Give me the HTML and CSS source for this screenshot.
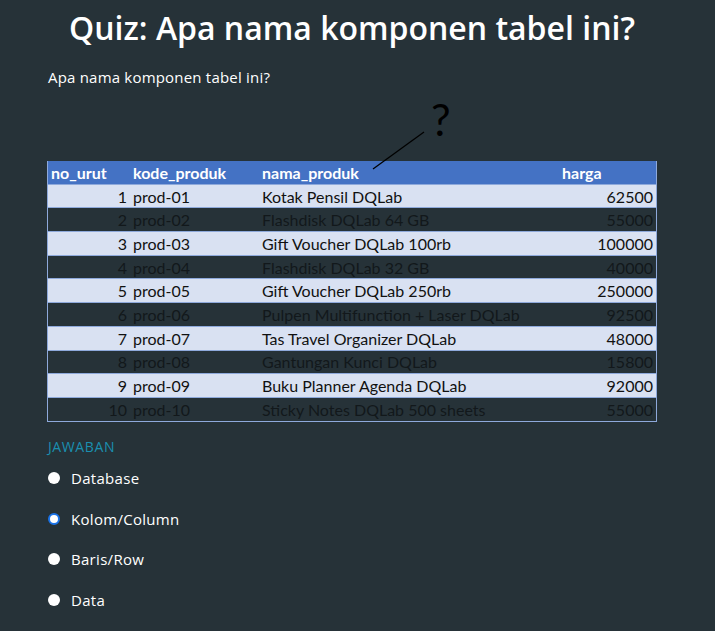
FILE: index.html
```html
<!DOCTYPE html>
<html lang="id">
<head>
<meta charset="utf-8">
<title>Quiz</title>
<link rel="stylesheet" href="styles.css">
</head>
<body>
<main class="quiz">
  <h1 class="quiz-title">Quiz: Apa nama komponen tabel ini?</h1>
  <p class="quiz-question">Apa nama komponen tabel ini?</p>
  <figure class="figure">
    <svg class="annot-svg" width="610" height="80" viewBox="0 0 610 80">
      <text x="384" y="45" class="qmark">?</text>
      <line x1="377" y1="41" x2="326" y2="78" stroke="#000" stroke-width="1.3"/>
    </svg>
    <div class="annot-space"></div>
    <table class="tbl">
      <thead>
        <tr><th class="c1">no_urut</th><th class="c2">kode_produk</th><th class="c3">nama_produk</th><th class="c4">harga</th></tr>
      </thead>
      <tbody>
        <tr class="lt"><td class="c1 num">1</td><td class="c2">prod-01</td><td class="c3">Kotak Pensil DQLab</td><td class="c4 num">62500</td></tr>
        <tr class="dk"><td class="c1 num">2</td><td class="c2">prod-02</td><td class="c3">Flashdisk DQLab 64 GB</td><td class="c4 num">55000</td></tr>
        <tr class="lt"><td class="c1 num">3</td><td class="c2">prod-03</td><td class="c3">Gift Voucher DQLab 100rb</td><td class="c4 num">100000</td></tr>
        <tr class="dk"><td class="c1 num">4</td><td class="c2">prod-04</td><td class="c3">Flashdisk DQLab 32 GB</td><td class="c4 num">40000</td></tr>
        <tr class="lt"><td class="c1 num">5</td><td class="c2">prod-05</td><td class="c3">Gift Voucher DQLab 250rb</td><td class="c4 num">250000</td></tr>
        <tr class="dk"><td class="c1 num">6</td><td class="c2">prod-06</td><td class="c3">Pulpen Multifunction + Laser DQLab</td><td class="c4 num">92500</td></tr>
        <tr class="lt"><td class="c1 num">7</td><td class="c2">prod-07</td><td class="c3">Tas Travel Organizer DQLab</td><td class="c4 num">48000</td></tr>
        <tr class="dk"><td class="c1 num">8</td><td class="c2">prod-08</td><td class="c3">Gantungan Kunci DQLab</td><td class="c4 num">15800</td></tr>
        <tr class="lt"><td class="c1 num">9</td><td class="c2">prod-09</td><td class="c3">Buku Planner Agenda DQLab</td><td class="c4 num">92000</td></tr>
        <tr class="dk"><td class="c1 num">10</td><td class="c2">prod-10</td><td class="c3">Sticky Notes DQLab 500 sheets</td><td class="c4 num">55000</td></tr>
      </tbody>
    </table>
  </figure>
  <section class="answers">
    <div class="answers-label">JAWABAN</div>
    <label class="opt"><input type="radio" name="a" class="radio"><span>Database</span></label>
    <label class="opt"><input type="radio" name="a" class="radio" checked><span>Kolom/Column</span></label>
    <label class="opt"><input type="radio" name="a" class="radio"><span>Baris/Row</span></label>
    <label class="opt"><input type="radio" name="a" class="radio"><span>Data</span></label>
  </section>
</main>
</body>
</html>
```
FILE: styles.css
```css
html, body {
  margin: 0;
  padding: 0;
  background: #263238;
  color: #fff;
  font-family: "Open Sans", "Noto Sans", sans-serif;
}
.quiz {
  width: 610px;
  margin-left: 47px;
  padding-top: 6px;
}
.quiz-title {
  margin: 0;
  text-align: center;
  font-size: 32px;
  font-weight: 600;
  line-height: 44px;
}
.quiz-question {
  margin: 17px 0 0 1px;
  font-size: 15px;
  letter-spacing: 0.2px;
  line-height: 20px;
}
.figure {
  margin: 0;
  padding-top: 4px;
  position: relative;
}
.annot-space {
  height: 70px;
}
.annot-svg {
  position: absolute;
  top: 4px;
  left: 0;
  z-index: 1;
  overflow: visible;
}
.qmark {
  font-family: "Lato", "Open Sans", sans-serif;
  font-size: 44px;
  fill: #000;
}
.tbl {
  width: 610px;
  border-collapse: collapse;
  font-family: "Lato", "Open Sans", sans-serif;
  font-size: 16px;
  border-left: 1px solid #8ea9db;
  border-right: 1px solid #8ea9db;
  border-bottom: 1px solid #8ea9db;
}
.tbl th, .tbl td {
  padding: 0 3px;
  height: 22.7px;
  text-align: left;
  white-space: nowrap;
}
.tbl th {
  background: #4472c4;
  color: #fff;
  font-weight: bold;
  border-bottom: 1px solid #8ea9db;
}
.tbl td {
  border-bottom: 1px solid #8ea9db;
  color: #111;
}
.tbl .num { text-align: right; }
.lt td { background: #d9e1f2; }
.dk td { background: transparent; color: #12181b; }
.c1 { width: 76px; }
.c2 { width: 123px; }
.c3 { width: 294px; }
.c4 { width: auto; }
.answers {
  margin-top: 16px;
  padding-left: 1px;
}
.answers-label {
  color: #1a8fb0;
  font-size: 14px;
  letter-spacing: 0.6px;
  line-height: 18px;
  margin-bottom: 2px;
}
.opt {
  display: flex;
  align-items: center;
  height: 40.7px;
  font-size: 15px;
  letter-spacing: 0.3px;
  gap: 11px;
}
.radio {
  appearance: none;
  -webkit-appearance: none;
  margin: 0;
  width: 12px;
  height: 12px;
  border-radius: 50%;
  background: #fff;
}
.radio:checked {
  border: 2px solid #1a73e8;
  background: #fff;
}
```
